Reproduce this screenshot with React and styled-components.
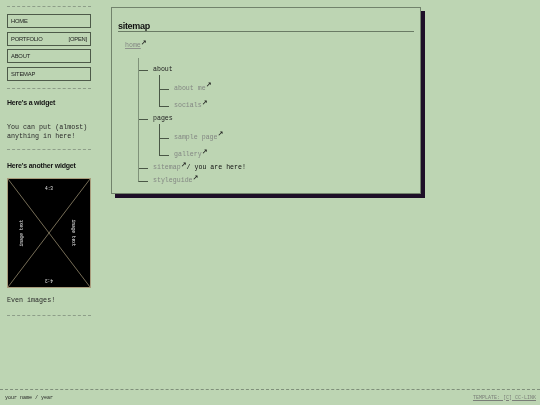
import React from "react";
import styled, { createGlobalStyle } from "styled-components";

const Global = createGlobalStyle`
  html, body { margin: 0; padding: 0; }
  body {
    background: #bdd5b3;
    color: #222;
    font-family: "Liberation Mono", "DejaVu Sans Mono", monospace;
    -webkit-font-smoothing: antialiased;
  }
  * { box-sizing: border-box; }
`;

const Page = styled.div`
  min-height: 100vh;
  display: flex;
  flex-direction: column;
  will-change: transform;
`;

const Layout = styled.div`
  flex: 1;
  display: flex;
  align-items: flex-start;
  gap: 20px;
  padding: 6px 0 0 7px;
`;

const Sidebar = styled.aside`
  width: 84px;
  display: flex;
  flex-direction: column;
`;

const Divider = styled.hr`
  margin: ${(p) => p.$m || "0"};
  border: 0;
  border-top: 1px dashed #8d9d88;
  height: 0;
`;

const Nav = styled.nav`
  display: flex;
  flex-direction: column;
  gap: 3.5px;
  margin: 7px 0 7.5px;
`;

const NavButton = styled.a`
  height: 14px;
  display: flex;
  align-items: center;
  justify-content: space-between;
  padding: 0 3px;
  border: 1px solid #4d5a49;
  font-family: "Liberation Sans", Arial, sans-serif;
  font-size: 5.8px;
  letter-spacing: -0.2px;
  text-transform: uppercase;
  color: #1e1e1e;
  text-decoration: none;
`;

const WidgetTitle = styled.h2`
  margin: ${(p) => p.$m || "0"};
  font-family: "Liberation Sans", Arial, sans-serif;
  font-weight: bold;
  font-size: 7px;
  letter-spacing: -0.2px;
  line-height: 10px;
  color: #151515;
`;

const WidgetText = styled.p`
  margin: ${(p) => p.$m || "0"};
  font-size: 6.7px;
  line-height: 9px;
  color: #2a2a2a;
`;

const Figure = styled.div`
  margin-top: 7px;
  width: 84px;
  height: 110px;
  svg { display: block; }
`;

const Main = styled.main`
  margin-top: 1px;
  width: 310px;
  border: 1px solid #72836c;
  box-shadow: 4px 4px 0 #1e0f28;
  padding: 13px 6px 7px 6px;
`;

const Title = styled.h1`
  margin: 0;
  font-family: "Liberation Sans", Arial, sans-serif;
  font-weight: 600;
  font-size: 9px;
  letter-spacing: -0.3px;
  line-height: 10px;
  color: #111;
  border-bottom: 1px solid #6a7b65;
`;

const HomeRow = styled.div`
  margin-top: 9px;
  padding-left: 7px;
  line-height: 10px;
  font-size: 6.6px;
`;

const Link = styled.a`
  color: #838783;
  text-decoration: ${(p) => (p.$underline ? "underline" : "none")};
  text-decoration-color: #8e928c;
`;

const Ext = styled.span`
  font-family: "DejaVu Sans", sans-serif;
  font-weight: bold;
  font-size: 7px;
  color: #1a1a1a;
  position: relative;
  top: -2.5px;
  line-height: 0;
`;

const TreeList = styled.ul`
  list-style: none;
  margin: ${(p) => p.$margin};
  padding: ${(p) => p.$lead}px 0 0 0;

  & > li {
    position: relative;
    padding: ${(p) => p.$step}px 0 0 15px;
    line-height: 10px;
    font-size: 6.6px;
  }
  & > li::before {
    content: "";
    position: absolute;
    left: 0;
    top: 0;
    width: 9px;
    height: ${(p) => p.$step + 5}px;
    border-left: ${(p) => p.$w}px solid ${(p) => p.$line};
    border-bottom: 1px solid #4a5746;
  }
  & > li:first-child::before {
    top: -${(p) => p.$lead}px;
    height: ${(p) => p.$step + 5 + p.$lead}px;
  }
  & > li:not(:last-child)::after {
    content: "";
    position: absolute;
    left: 0;
    top: ${(p) => p.$step + 5}px;
    bottom: 0;
    border-left: ${(p) => p.$w}px solid ${(p) => p.$line};
  }
`;

const Plain = styled.span`
  color: #1e1e1e;
`;

const Here = styled.span`
  color: #111;
  font-weight: 500;
`;

const Footer = styled.footer`
  height: 16px;
  border-top: 1px dashed #7f8f7a;
  display: flex;
  align-items: center;
  justify-content: space-between;
  padding: 0 4px 0 5px;
  font-size: 5px;
  color: #222;
`;

const FooterLink = styled.a`
  color: #7a7e78;
  text-decoration: underline;
  text-transform: uppercase;
`;

const Placeholder = () => (
  <svg width="84" height="110" viewBox="0 0 84 110">
    <rect x="0.5" y="0.5" width="83" height="109" fill="#000" stroke="#a89b7b" />
    <line x1="1" y1="1" x2="83" y2="109" stroke="#a89b7b" strokeWidth="0.7" />
    <line x1="83" y1="1" x2="1" y2="109" stroke="#a89b7b" strokeWidth="0.7" />
    <g fill="#e6e6e6" fontFamily="Liberation Mono, monospace" fontSize="4.5" textAnchor="middle">
      <text x="42" y="12">4:3</text>
      <text x="42" y="100" transform="rotate(180 42 100.5)">4:3</text>
      <text x="0" y="0" transform="translate(15.5 55) rotate(-90)">image text</text>
      <text x="0" y="0" transform="translate(64.5 55) rotate(90)">image text</text>
    </g>
  </svg>
);

const Item = ({ href, children, underline }) => (
  <>
    <Link href={href} $underline={underline}>{children}</Link>
    <Ext>↗</Ext>
  </>
);

const TOP = { $lead: 4, $step: 3, $margin: "7px 0 0 20px", $line: "#7f9279", $w: 1.5 };
const SUB = { $lead: 1, $step: 7.5, $margin: "0 0 0 6px", $line: "#4a5746", $w: 1 };

export default function App() {
  return (
    <Page>
      <Global />
      <Layout>
        <Sidebar>
          <Divider />
          <Nav>
            <NavButton href="#">Home</NavButton>
            <NavButton href="#">
              <span>Portfolio</span>
              <span>[open]</span>
            </NavButton>
            <NavButton href="#">About</NavButton>
            <NavButton href="#">Sitemap</NavButton>
          </Nav>
          <Divider />
          <WidgetTitle $m="9px 0 0">Here's a widget</WidgetTitle>
          <WidgetText $m="14.5px 0 0">
            You can put (almost)
            <br />
            anything in here!
          </WidgetText>
          <Divider $m="8.5px 0 0" />
          <WidgetTitle $m="10.5px 0 0">Here's another widget</WidgetTitle>
          <Figure>
            <Placeholder />
          </Figure>
          <WidgetText $m="8.5px 0 0">Even images!</WidgetText>
          <Divider $m="9.5px 0 0" />
        </Sidebar>

        <Main>
          <Title>sitemap</Title>
          <HomeRow>
            <Item href="#" underline>home</Item>
          </HomeRow>
          <TreeList {...TOP}>
            <li>
              <Plain>about</Plain>
              <TreeList {...SUB}>
                <li><Item href="#">about me</Item></li>
                <li><Item href="#">socials</Item></li>
              </TreeList>
            </li>
            <li>
              <Plain>pages</Plain>
              <TreeList {...SUB}>
                <li><Item href="#">sample page</Item></li>
                <li><Item href="#">gallery</Item></li>
              </TreeList>
            </li>
            <li>
              <Item href="#">sitemap</Item>
              <Here>/ you are here!</Here>
            </li>
            <li><Item href="#">styleguide</Item></li>
          </TreeList>
        </Main>
      </Layout>
      <Footer>
        <span>your name / year</span>
        <FooterLink href="#">template: [c] cc-link</FooterLink>
      </Footer>
    </Page>
  );
}
